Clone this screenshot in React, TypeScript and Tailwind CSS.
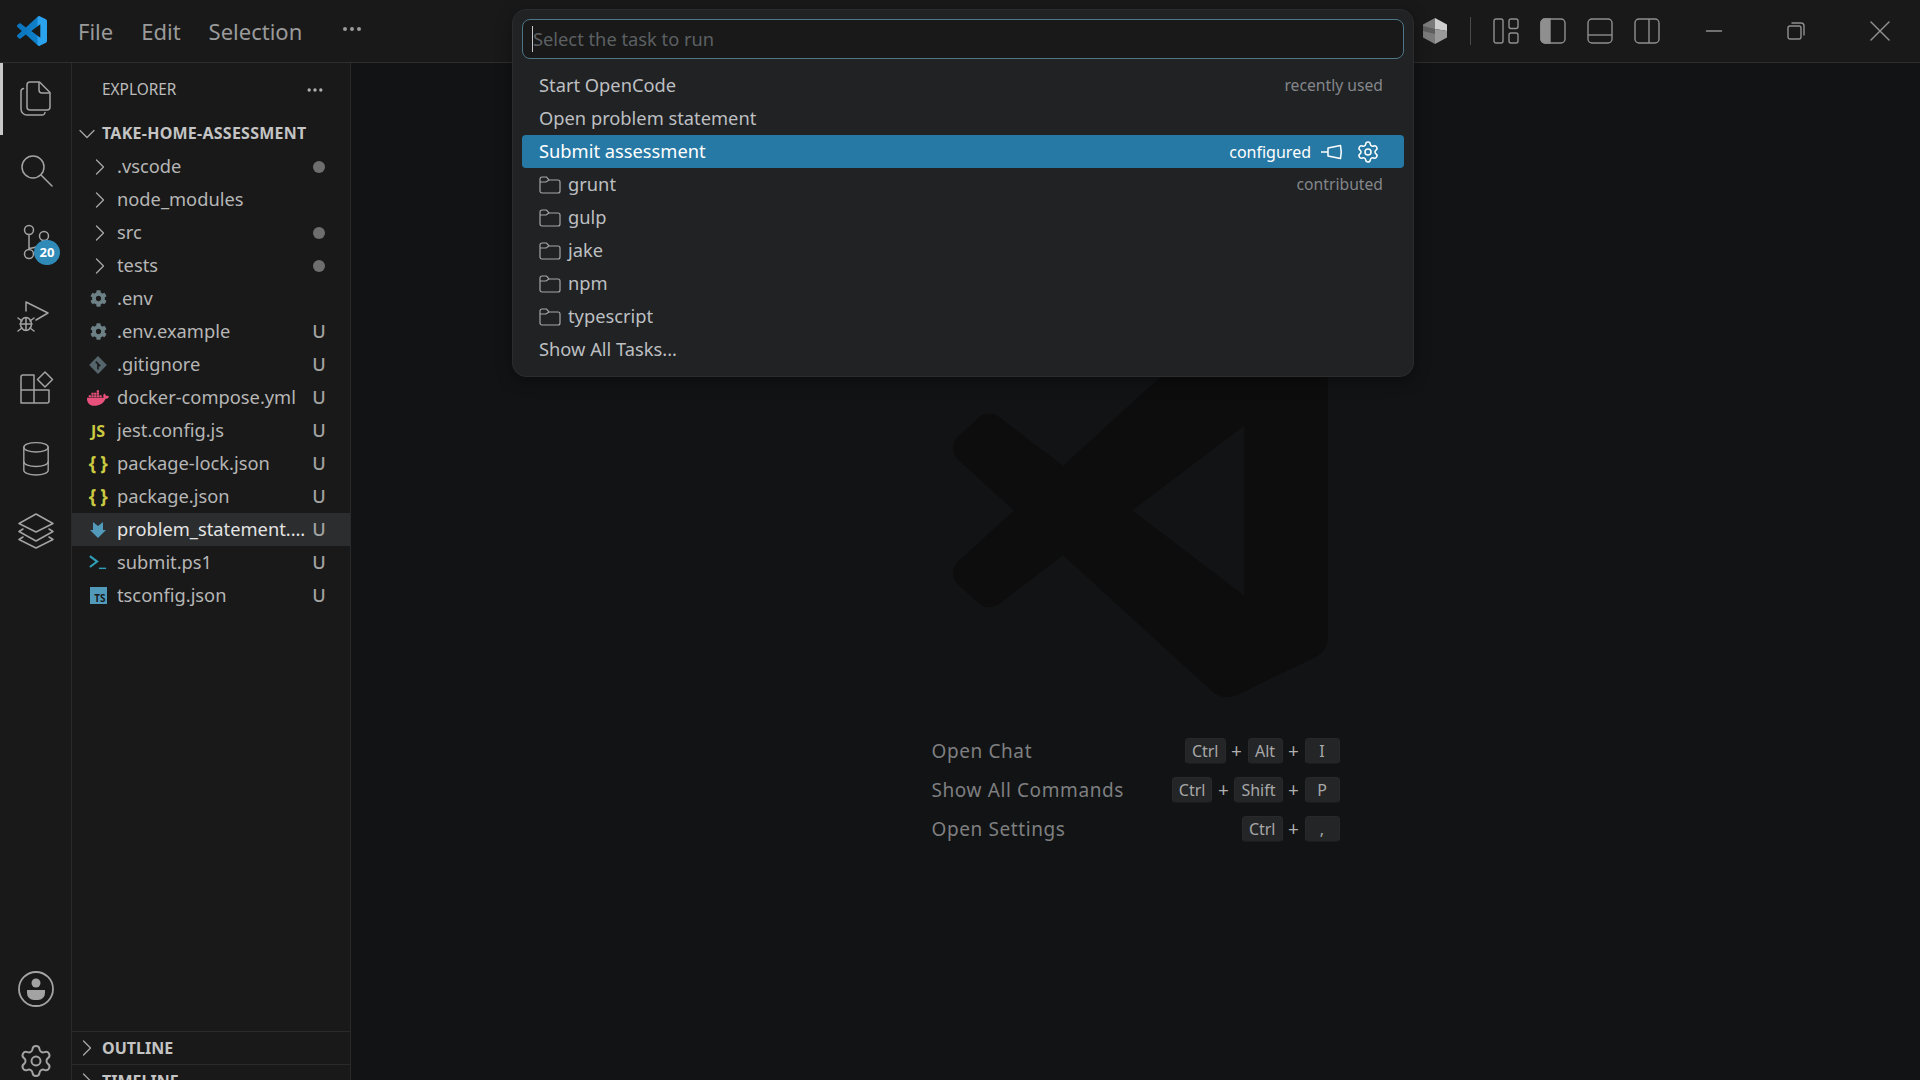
import React from 'react';
import { Settings, ChevronRight, ChevronDown, Ellipsis, X, Minus } from 'lucide-react';
import { FaCog, FaDocker } from 'react-icons/fa';

const vscodePath =
  'M23.15 2.587L18.21.21a1.494 1.494 0 0 0-1.705.29l-9.46 8.63-4.12-3.128a.999.999 0 0 0-1.276.057L.327 7.261A1 1 0 0 0 .326 8.74L3.899 12 .326 15.26a1 1 0 0 0 .001 1.479L1.65 17.94a.999.999 0 0 0 1.276.057l4.12-3.128 9.46 8.63a1.492 1.492 0 0 0 1.704.29l4.942-2.377A1.5 1.5 0 0 0 24 20.06V3.939a1.5 1.5 0 0 0-.85-1.352zm-4.5 14.861L11.472 12l7.178-5.448v10.896z';

type FileRow = { name: string; icon: React.ReactNode; status?: 'U' | 'dot'; folder?: boolean; active?: boolean };

function GearIcon() {
  return <FaCog className="w-[17px] h-[17px] text-[#6d8086]" />;
}

function GitIcon() {
  return (
    <svg viewBox="0 0 18 18" className="w-[20px] h-[20px]">
      <path d="M9 1l8 8-8 8-8-8z" fill="#56646c" />
      <path d="M7 6l4 4M9 8v5" stroke="#1a1a1a" strokeWidth="1.4" fill="none" />
    </svg>
  );
}

function JsonIcon() {
  return <span className="text-[19px] font-bold text-[#cbcb41] leading-none tracking-[-0.5px]">{'{ }'}</span>;
}

function MarkdownIcon() {
  return (
    <svg viewBox="0 0 18 18" className="w-[18px] h-[18px]">
      <path d="M4 1l5 4 5-4v8h3l-8 8-8-8h3z" fill="#519aba" />
    </svg>
  );
}

function PowershellIcon() {
  return (
    <svg viewBox="0 0 20 18" className="w-[18px] h-[17px]" fill="none">
      <path d="M1 2l8 6-8 6" stroke="#2f9db5" strokeWidth="2.4" />
      <path d="M11 15.5h8" stroke="#2f9db5" strokeWidth="1.6" />
    </svg>
  );
}

function TsIcon() {
  return (
    <span className="w-[17px] h-[17px] bg-[#519aba] flex items-end justify-end text-[10px] font-bold leading-[12px] text-[#1a1a1a] pr-[1px]">
      TS
    </span>
  );
}

const files: FileRow[] = [
  { name: '.vscode', folder: true, status: 'dot', icon: null },
  { name: 'node_modules', folder: true, icon: null },
  { name: 'src', folder: true, status: 'dot', icon: null },
  { name: 'tests', folder: true, status: 'dot', icon: null },
  { name: '.env', icon: <GearIcon /> },
  { name: '.env.example', status: 'U', icon: <GearIcon /> },
  { name: '.gitignore', status: 'U', icon: <GitIcon /> },
  { name: 'docker-compose.yml', status: 'U', icon: <FaDocker className="w-[22px] h-[22px] text-[#e8507c]" /> },
  {
    name: 'jest.config.js',
    status: 'U',
    icon: <span className="text-[16px] font-bold text-[#cbcb41] leading-none">JS</span>,
  },
  { name: 'package-lock.json', status: 'U', icon: <JsonIcon /> },
  { name: 'package.json', status: 'U', icon: <JsonIcon /> },
  { name: 'problem_statement.md', status: 'U', icon: <MarkdownIcon />, active: true },
  { name: 'submit.ps1', status: 'U', icon: <PowershellIcon /> },
  { name: 'tsconfig.json', status: 'U', icon: <TsIcon /> },
];

const tasks = [
  { label: 'Start OpenCode', note: 'recently used' },
  { label: 'Open problem statement' },
  { label: 'Submit assessment', note: 'configured', selected: true },
  { label: 'grunt', note: 'contributed', folder: true },
  { label: 'gulp', folder: true },
  { label: 'jake', folder: true },
  { label: 'npm', folder: true },
  { label: 'typescript', folder: true },
  { label: 'Show All Tasks...' },
];

const hints = [
  { label: 'Open Chat', keys: ['Ctrl', 'Alt', 'I'] },
  { label: 'Show All Commands', keys: ['Ctrl', 'Shift', 'P'] },
  { label: 'Open Settings', keys: ['Ctrl', ','] },
];

function FolderGlyph() {
  return (
    <svg viewBox="0 0 22 18" className="w-[22px] h-[18px]" fill="none" stroke="#a3a5a7" strokeWidth="1.2">
      <path d="M1 3a2 2 0 0 1 2-2h4.5l2.5 3h9a2 2 0 0 1 2 2v9a2 2 0 0 1-2 2H3a2 2 0 0 1-2-2z" />
      <path d="M1 6h6l3-2" />
    </svg>
  );
}

function ActivityBar() {
  const stroke = { fill: 'none', stroke: '#a3a3a3', strokeWidth: 1.5, strokeLinecap: 'round', strokeLinejoin: 'round' } as const;
  return (
    <div className="w-[72px] shrink-0 border-r border-[#2a2a2a] h-[1034px] flex flex-col justify-between">
      <div>
        <div className="relative h-[72px] flex items-center justify-center pr-[2px]">
          <div className="absolute left-0 top-0 bottom-0 w-[3px] bg-[#c8c8c8]" />
          <svg viewBox="0 0 36 38" className="w-[36px] h-[38px]" {...stroke}>
            <path d="M13 2h9.5L33 12.5V27a3 3 0 0 1-3 3H13a3 3 0 0 1-3-3V5a3 3 0 0 1 3-3z" />
            <path d="M22 2.5V10a3 3 0 0 0 3 3h7.5" />
            <path d="M6.5 8.5A3 3 0 0 0 4 11.5V29a6 6 0 0 0 6 6h15a3 3 0 0 0 3-2.500" />
          </svg>
        </div>
        <div className="h-[72px] flex items-center justify-center">
          <svg viewBox="0 0 36 36" className="w-[36px] h-[36px]" {...stroke}>
            <circle cx="15" cy="14" r="11" />
            <path d="M23 22l11 11" />
          </svg>
        </div>
        <div className="relative h-[73px] flex items-center justify-center">
          <svg viewBox="0 0 36 40" className="w-[36px] h-[40px]" {...stroke}>
            <circle cx="11" cy="6" r="4.500" />
            <circle cx="26" cy="12" r="4.500" />
            <circle cx="11" cy="30" r="4.500" />
            <path d="M11 10.500v15M26 16.500c0 6-6 6-15 8" />
          </svg>
          <div className="absolute left-[34px] top-[33px] w-[26px] h-[25px] rounded-full bg-[#2f8ab8] flex items-center justify-center text-[13px] font-bold text-white">
            20
          </div>
        </div>
        <div className="h-[73px] flex items-center justify-center pr-[4px]">
          <svg viewBox="0 0 36 36" className="w-[36px] h-[36px]" {...stroke}>
            <path d="M10 12V3l22 11-12 7" />
            <ellipse cx="10" cy="25" rx="5.500" ry="6.500" />
            <path d="M4 25h12M10 19v12M2 19l4 3M18 19l-4 3M2 32l4-3M18 32l-4-3" />
          </svg>
        </div>
        <div className="h-[70px] flex items-center justify-center">
          <svg viewBox="0 0 36 36" className="w-[36px] h-[36px]" {...stroke}>
            <path d="M16 5H5a2 2 0 0 0-2 2v26h26a2 2 0 0 0 2-2V20H16zM3 20h13v13M16 5v15" />
            <path d="M27 2l7.500 7.500L27 17l-7.500-7.500z" />
          </svg>
        </div>
        <div className="h-[72px] flex items-center justify-center">
          <svg viewBox="0 0 32 38" className="w-[30px] h-[36px]" {...stroke}>
            <ellipse cx="16" cy="6.500" rx="13" ry="5" />
            <path d="M3 6.500V31c0 3 6 5 13 5s13-2 13-5V6.500" />
            <path d="M3 22c0 3 6 5 13 5s13-2 13-5" />
          </svg>
        </div>
        <div className="h-[72px] flex items-center justify-center">
          <svg viewBox="0 0 38 38" className="w-[38px] h-[38px]" {...stroke}>
            <path d="M19 2L36 11.500 19 20 2 11.500z" />
            <path d="M6 17L2 19.500 19 29l17-9.500L32 17" />
            <path d="M6 25L2 27.500 19 36l17-8.500L32 25" />
          </svg>
        </div>
      </div>
      <div>
        <div className="h-[72px] flex items-center justify-center">
          <svg viewBox="0 0 36 36" className="w-[36px] h-[36px]">
            <circle cx="18" cy="18" r="17" fill="none" stroke="#a3a3a3" strokeWidth="1.800" />
            <circle cx="18" cy="12" r="4.500" fill="#a3a3a3" />
            <path d="M9 19h18v3a7 7 0 0 1-7 7h-4a7 7 0 0 1-7-7z" fill="#a3a3a3" />
          </svg>
        </div>
        <div className="h-[72px] flex items-center justify-center">
          <Settings className="w-[36px] h-[36px] text-[#a3a3a3]" strokeWidth={1.3} />
        </div>
      </div>
    </div>
  );
}

function Sidebar() {
  return (
    <div className="w-[279px] shrink-0 border-r border-[#2a2a2a] flex flex-col text-[18.300px]">
      <div className="h-[968px] shrink-0 overflow-hidden">
        <div className="h-[54px] flex items-center justify-between pl-[30px] pr-[25px]">
          <span className="text-[15.400px] text-[#bdbdbd]">EXPLORER</span>
          <Ellipsis className="w-[20px] h-[20px] text-[#b0b0b0]" />
        </div>
        <div className="h-[33px] flex items-center">
          <ChevronDown className="w-[28px] h-[28px] ml-[1px] mr-[1px] text-[#a8a8a8]" strokeWidth={1.1} />
          <span className="text-[16px] tracking-[0.25px] font-bold text-[#c4c4c4] mb-[2px]">TAKE-HOME-ASSESSMENT</span>
        </div>
        {files.map((f) => (
          <div
            key={f.name}
            className={
              f.active ? 'h-[33px] flex items-center bg-[#2b2d2e] text-[#e4e4e4]' : 'h-[33px] flex items-center text-[#b6b6b6]'
            }
          >
            <div className="ml-[13px] w-[26px] mr-[6px] flex items-center justify-center shrink-0">
              {f.folder ? <ChevronRight className="w-[28px] h-[28px] ml-[3px] shrink-0 text-[#a8a8a8]" strokeWidth={1.1} /> : f.icon}
            </div>
            <span className="flex-1 min-w-0 truncate mb-[1px]">{f.name}</span>
            <div className="w-[22px] mr-[20px] shrink-0 flex items-center justify-center">
              {f.status === 'U' && <span className="text-[#a2a2a2] font-medium mb-[1px]">U</span>}
              {f.status === 'dot' && <span className="w-[12px] h-[12px] rounded-full bg-[#6e6e6e]" />}
            </div>
          </div>
        ))}
      </div>
      <div className="h-[33px] shrink-0 flex items-center border-t border-[#2a2a2a]">
        <ChevronRight className="w-[28px] h-[28px] ml-[1px] mr-[1px] text-[#a8a8a8]" strokeWidth={1.1} />
        <span className="text-[16px] font-bold text-[#c4c4c4]">OUTLINE</span>
      </div>
      <div className="h-[33px] shrink-0 flex items-center border-t border-[#2a2a2a]">
        <ChevronRight className="w-[28px] h-[28px] ml-[1px] mr-[1px] text-[#a8a8a8]" strokeWidth={1.1} />
        <span className="text-[16px] font-bold text-[#c4c4c4]">TIMELINE</span>
      </div>
    </div>
  );
}

function Editor() {
  return (
    <div className="flex-1 bg-[#121314] flex flex-col items-center pt-[260px]">
      <svg viewBox="0 0 24 24" className="w-[375px] h-[375px] ml-[10px] shrink-0">
        <path d={vscodePath} fill="#0d0d0d" />
      </svg>
      <div className="mt-[40px] w-[408px] flex flex-col gap-[13px]">
        {hints.map((h) => (
          <div key={h.label} className="h-[26px] flex items-center justify-between">
            <span className="text-[19px] tracking-[0.6px] text-[#7e7f81]">{h.label}</span>
            <div className="flex items-center">
              {h.keys.map((k, i) => (
                <React.Fragment key={k}>
                  {i > 0 && <span className="w-[22px] text-center text-[19px] text-[#b0b0b0]">+</span>}
                  <span className="h-[26px] min-w-[35px] px-[6px] rounded-[4px] bg-[#232527] border border-[#28292b] border-b-[#1b1c1e] flex items-center justify-center text-[16px] text-[#a8a8a8]">
                    {k}
                  </span>
                </React.Fragment>
              ))}
            </div>
          </div>
        ))}
      </div>
    </div>
  );
}

function TaskPicker() {
  return (
    <div className="absolute left-[512px] top-[9px] w-[902px] h-[368px] rounded-[14px] bg-[#202224] border border-[#2a2c2e] shadow-[0_4px_16px_rgba(0,0,0,0.35)] px-[9px] pt-[9px]">
      <div className="h-[40px] rounded-[8px] border border-[#4f7687] bg-[#191919] flex items-center pl-[9px]">
        <span className="w-[1px] h-[26px] bg-[#c8c8c8]" />
        <span className="text-[18.300px] text-[#5c6063]">Select the task to run</span>
      </div>
      <div className="mt-[10px]">
        {tasks.map((t) => (
          <div
            key={t.label}
            className={
              t.selected
                ? 'h-[33px] rounded-[4px] bg-[#2779a5] text-white flex items-center pl-[17px] pr-[24px] text-[18.300px]'
                : 'h-[33px] flex items-center pl-[17px] pr-[21px] text-[18.300px] text-[#bdbfc1]'
            }
          >
            {t.folder && (
              <span className="mr-[7px] flex items-center">
                <FolderGlyph />
              </span>
            )}
            <span className="flex-1 mb-[2px]">{t.label}</span>
            {t.note && (
              <span className={t.selected ? 'text-[16px] text-white' : 'text-[15.700px] text-[#84868a]'}>{t.note}</span>
            )}
            {t.selected && (
              <div className="flex items-center ml-[10px] gap-[13px] text-white">
                <svg viewBox="0 0 22 16" className="w-[22px] h-[16px]" fill="none" stroke="currentColor" strokeWidth="1.500" strokeLinejoin="round">
                  <path d="M0 8h7" />
                  <path d="M7 4v8l12.500 2.500q1.500-6.500 0-13z" />
                </svg>
                <Settings className="w-[24px] h-[24px]" strokeWidth={1.5} />
              </div>
            )}
          </div>
        ))}
      </div>
    </div>
  );
}

function TitleBar() {
  const iconStroke = { fill: 'none', stroke: '#8f8f8f', strokeWidth: 1.400 };
  return (
    <div className="h-[63px] shrink-0 border-b border-[#2e2e2e] flex items-center">
      <svg viewBox="0 0 24 24" className="w-[30px] h-[30px] ml-[17px] mr-[31px]">
        <defs>
          <linearGradient id="vsc" x1="0" y1="0" x2="1" y2="0">
            <stop offset="0" stopColor="#0b74bd" />
            <stop offset="0.65" stopColor="#0f7fc9" />
            <stop offset="0.72" stopColor="#2aa2ee" />
            <stop offset="1" stopColor="#2aa2ee" />
          </linearGradient>
        </defs>
        <path d={vscodePath} fill="url(#vsc)" />
      </svg>
      <div className="flex items-center gap-[28px] text-[22px] text-[#9a9a9a]">
        <span>File</span>
        <span>Edit</span>
        <span>Selection</span>
      </div>
      <Ellipsis className="ml-[38px] w-[24px] h-[24px] text-[#9a9a9a] -mt-[4px]" />
      <div className="ml-auto flex items-center">
        <svg viewBox="0 0 26 28" className="w-[26px] h-[28px]">
          <path d="M13 1L1 7.500v13L13 27z" fill="#7b7b7b" />
          <path d="M13 1l12 6.500V14L13 12z" fill="#cfcfcf" />
          <path d="M13 12l12 2v6.500L13 27z" fill="#9a9a9a" />
          <path d="M1 14l12 3V12L1 9z" fill="#5e5e5e" />
        </svg>
        <div className="w-[1px] h-[28px] bg-[#4a4a4a] ml-[22px] mr-[22px]" />
        <svg viewBox="0 0 26 26" className="w-[26px] h-[26px] mr-[21px]" {...iconStroke}>
          <rect x="1" y="1" width="9" height="24" rx="2" />
          <rect x="16" y="1" width="9" height="9.500" rx="2" />
          <rect x="16" y="15" width="9" height="10" rx="2" />
        </svg>
        <svg viewBox="0 0 26 26" className="w-[26px] h-[26px] mr-[21px]" {...iconStroke}>
          <rect x="1" y="1" width="24" height="24" rx="4" />
          <path d="M5 1h5v24H5a4 4 0 0 1-4-4V5a4 4 0 0 1 4-4z" fill="#8f8f8f" />
        </svg>
        <svg viewBox="0 0 26 26" className="w-[26px] h-[26px] mr-[21px]" {...iconStroke}>
          <rect x="1" y="1" width="24" height="24" rx="4" />
          <path d="M1 17h24" />
        </svg>
        <svg viewBox="0 0 26 26" className="w-[26px] h-[26px]" {...iconStroke}>
          <rect x="1" y="1" width="24" height="24" rx="4" />
          <path d="M15 1v24" />
        </svg>
        <Minus className="ml-[41px] w-[26px] h-[26px] text-[#8f8f8f]" strokeWidth={1.200} />
        <svg viewBox="0 0 18 18" className="ml-[60px] w-[18px] h-[18px]" {...iconStroke}>
          <rect x="1" y="4" width="13" height="13" rx="2" />
          <path d="M4.500 1H14a3 3 0 0 1 3 3v9.500" />
        </svg>
        <X className="ml-[57px] mr-[22px] w-[36px] h-[36px] text-[#8f8f8f]" strokeWidth={1} />
      </div>
    </div>
  );
}

export default function App() {
  return (
    <div className="relative w-[1920px] h-[1080px] overflow-hidden bg-[#191919] font-['Noto_Sans',sans-serif]">
      <TitleBar />
      <div className="flex h-[1017px]">
        <ActivityBar />
        <Sidebar />
        <Editor />
      </div>
      <TaskPicker />
    </div>
  );
}
